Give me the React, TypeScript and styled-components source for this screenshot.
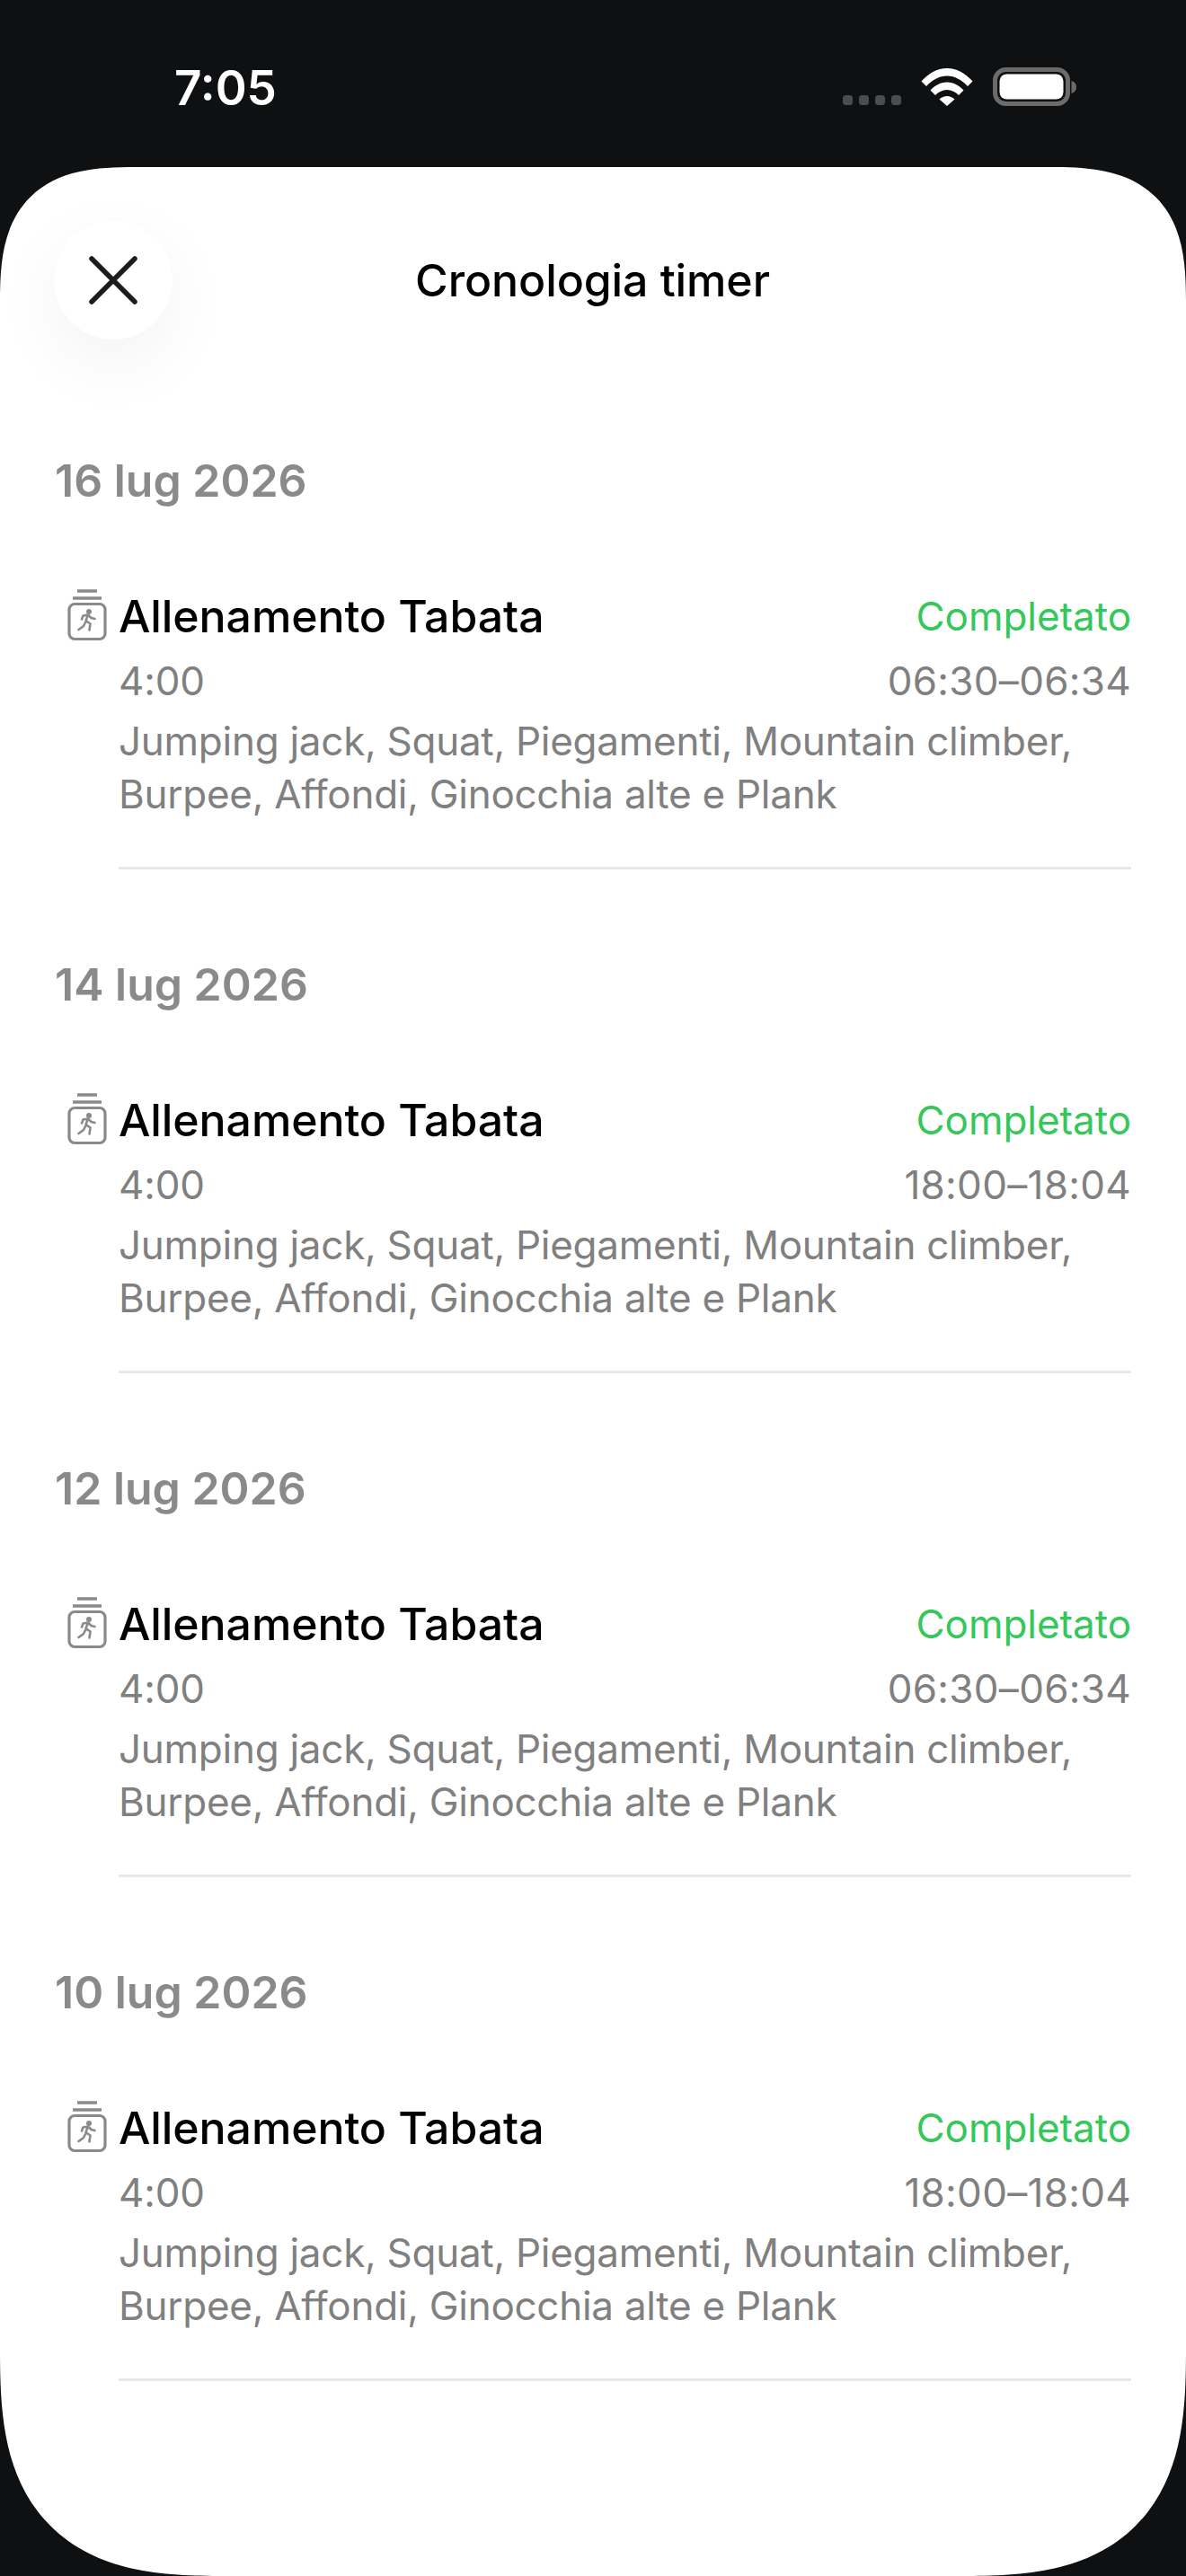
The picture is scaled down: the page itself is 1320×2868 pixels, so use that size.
import React from "react";
import styled, { createGlobalStyle } from "styled-components";

const Global = createGlobalStyle`
  html, body { margin: 0; padding: 0; background: #0e1012; }
  * { box-sizing: border-box; }
`;

const Page = styled.div`
  width: 1320px;
  height: 2868px;
  background: #0e1012;
  display: flex;
  flex-direction: column;
  overflow: hidden;
  font-family: Inter, "Liberation Sans", sans-serif;
`;

const StatusBar = styled.div`
  height: 186px;
  flex: none;
  display: flex;
  justify-content: space-between;
  align-items: flex-start;
  padding: 74px 121px 0 194px;
`;

const Clock = styled.div`
  color: #fff;
  font-size: 53px;
  line-height: 48px;
  font-weight: 600;
  letter-spacing: 0;
`;

const StatusIcons = styled.div`
  display: flex;
  align-items: flex-start;
  gap: 22px;
  padding-top: 1px;
`;

const Dots = styled.div`
  display: flex;
  gap: 7px;
  margin-top: 31px;
`;

const Dot = styled.span`
  width: 11px;
  height: 11px;
  border-radius: 3.5px;
  background: #4b4c4e;
`;

const Sheet = styled.div`
  flex: 1;
  background: #fff;
  border-radius: 150px 150px 250px 250px;
  corner-shape: superellipse(1.45);
  display: flex;
  flex-direction: column;
  padding: 60px 61px 0;
`;

const Header = styled.header`
  display: grid;
  grid-template-columns: 132px 1fr 132px;
  align-items: center;
  height: 132px;
  flex: none;
  margin-left: -1px;
`;

const CloseButton = styled.button`
  width: 132px;
  height: 132px;
  border: 0;
  border-radius: 50%;
  padding: 0;
  background: #fff;
  display: flex;
  align-items: center;
  justify-content: center;
  box-shadow: 0 26px 80px rgba(0, 0, 0, 0.05);
`;

const Title = styled.h1`
  margin: 0;
  text-align: center;
  font-size: 50px;
  line-height: 60px;
  font-weight: 550;
  color: #000;
  letter-spacing: -0.1px;
`;

const Section = styled.section`
  padding-top: 127px;
  &:not(:first-of-type) {
    padding-top: 98px;
  }
`;

const DateLabel = styled.h2`
  margin: 0 0 91px;
  font-size: 50px;
  line-height: 60px;
  font-weight: 600;
  color: #8a8a8a;
  letter-spacing: 0;
`;

const Row = styled.article`
  display: grid;
  grid-template-columns: 71px 1fr;
`;

const IconCell = styled.div`
  padding: 0 0 0 13px;
  height: 60px;
  display: flex;
  align-items: flex-start;
`;

const Body = styled.div`
  display: flex;
  flex-direction: column;
  border-bottom: 3px solid #e8e8e8;
  padding-bottom: 50px;
`;

const TopLine = styled.div`
  display: flex;
  justify-content: space-between;
  align-items: center;
  height: 60px;
`;

const MetaLine = styled(TopLine)`
  margin-top: 12px;
`;

const Name = styled.div`
  font-size: 50px;
  font-weight: 550;
  color: #000;
  letter-spacing: -0.1px;
`;

const Status = styled.div`
  font-size: 44px;
  color: #34c759;
  letter-spacing: -0.05px;
`;

const Meta = styled.div<{ $wide?: boolean }>`
  font-size: 44px;
  color: #808080;
  letter-spacing: ${(p) => (p.$wide ? "0.3px" : "-0.2px")};
`;

const Exercises = styled.p`
  margin: 8px 0 0;
  padding-bottom: 1px;
  font-size: 44px;
  line-height: 59px;
  color: #808080;
  letter-spacing: -0.27px;
`;

const RunnerIcon = () => (
  <svg width="46" height="60" viewBox="0 0 46 60" fill="none">
    <path d="M12 2h22M7 10h32" stroke="#8a8a8a" strokeWidth="3.5" />
    <rect x="3" y="16.5" width="40" height="39" rx="6" stroke="#8a8a8a" strokeWidth="3.2" />
    <circle cx="25" cy="25" r="3" fill="#8a8a8a" />
    <path
      d="M31.5 33l-4-1-3.5-3.5-5.5 1-1.5 4 M24 28.5l-2.5 6.5 5 3.5-1 7 M21 37l-2 4-5.5 4"
      stroke="#8a8a8a"
      strokeWidth="2.6"
      strokeLinecap="round"
      strokeLinejoin="round"
    />
  </svg>
);

const entries = [
  { date: "16 lug 2026", time: "06:30–06:34" },
  { date: "14 lug 2026", time: "18:00–18:04" },
  { date: "12 lug 2026", time: "06:30–06:34" },
  { date: "10 lug 2026", time: "18:00–18:04" },
];

export default function App() {
  return (
    <Page>
      <Global />
      <StatusBar>
        <Clock>7:05</Clock>
        <StatusIcons>
          <Dots>
            <Dot />
            <Dot />
            <Dot />
            <Dot />
          </Dots>
          <svg width="58" height="44" viewBox="0 0 58 44">
            <path
              d="M0.5 15.5C8 7 18 1 29 1s21 6 28.5 14.5L52 21C45.500 14 37.500 9.500 29 9.500S12.500 14 6 21z"
              fill="#fff"
            />
            <path
              d="M10.500 25.500C15 20.500 21.500 16.500 29 16.500s14 4 18.500 9L42 31c-3.500-3.500-8-6-13-6s-9.500 2.500-13 6z"
              fill="#fff"
            />
            <path d="M20.500 35.500C23 33.500 26 32 29 32s6 1.500 8.500 3.500L29 43z" fill="#fff" />
          </svg>
          <svg width="94" height="44" viewBox="0 0 94 44">
            <rect x="2.500" y="2.500" width="81" height="38" rx="12" fill="none" stroke="#6b6b6b" strokeWidth="5" />
            <rect x="7.500" y="7.500" width="71" height="28" rx="8" fill="#fff" />
            <path d="M87.500 15c3.500 1 5.500 3.500 5.500 7s-2 6-5.500 7z" fill="#6b6b6b" />
          </svg>
        </StatusIcons>
      </StatusBar>
      <Sheet>
        <Header>
          <CloseButton aria-label="Chiudi">
            <svg width="54" height="54" viewBox="0 0 54 54">
              <path d="M3 3l48 48M51 3L3 51" stroke="#1c1c1e" strokeWidth="5.500" strokeLinecap="round" />
            </svg>
          </CloseButton>
          <Title>Cronologia timer</Title>
          <span />
        </Header>
        {entries.map((e) => (
          <Section key={e.date}>
            <DateLabel>{e.date}</DateLabel>
            <Row>
              <IconCell>
                <RunnerIcon />
              </IconCell>
              <Body>
                <TopLine>
                  <Name>Allenamento Tabata</Name>
                  <Status>Completato</Status>
                </TopLine>
                <MetaLine>
                  <Meta>4:00</Meta>
                  <Meta $wide>{e.time}</Meta>
                </MetaLine>
                <Exercises>
                  Jumping jack, Squat, Piegamenti, Mountain climber,
                  <br />
                  Burpee, Affondi, Ginocchia alte e Plank
                </Exercises>
              </Body>
            </Row>
          </Section>
        ))}
      </Sheet>
    </Page>
  );
}
